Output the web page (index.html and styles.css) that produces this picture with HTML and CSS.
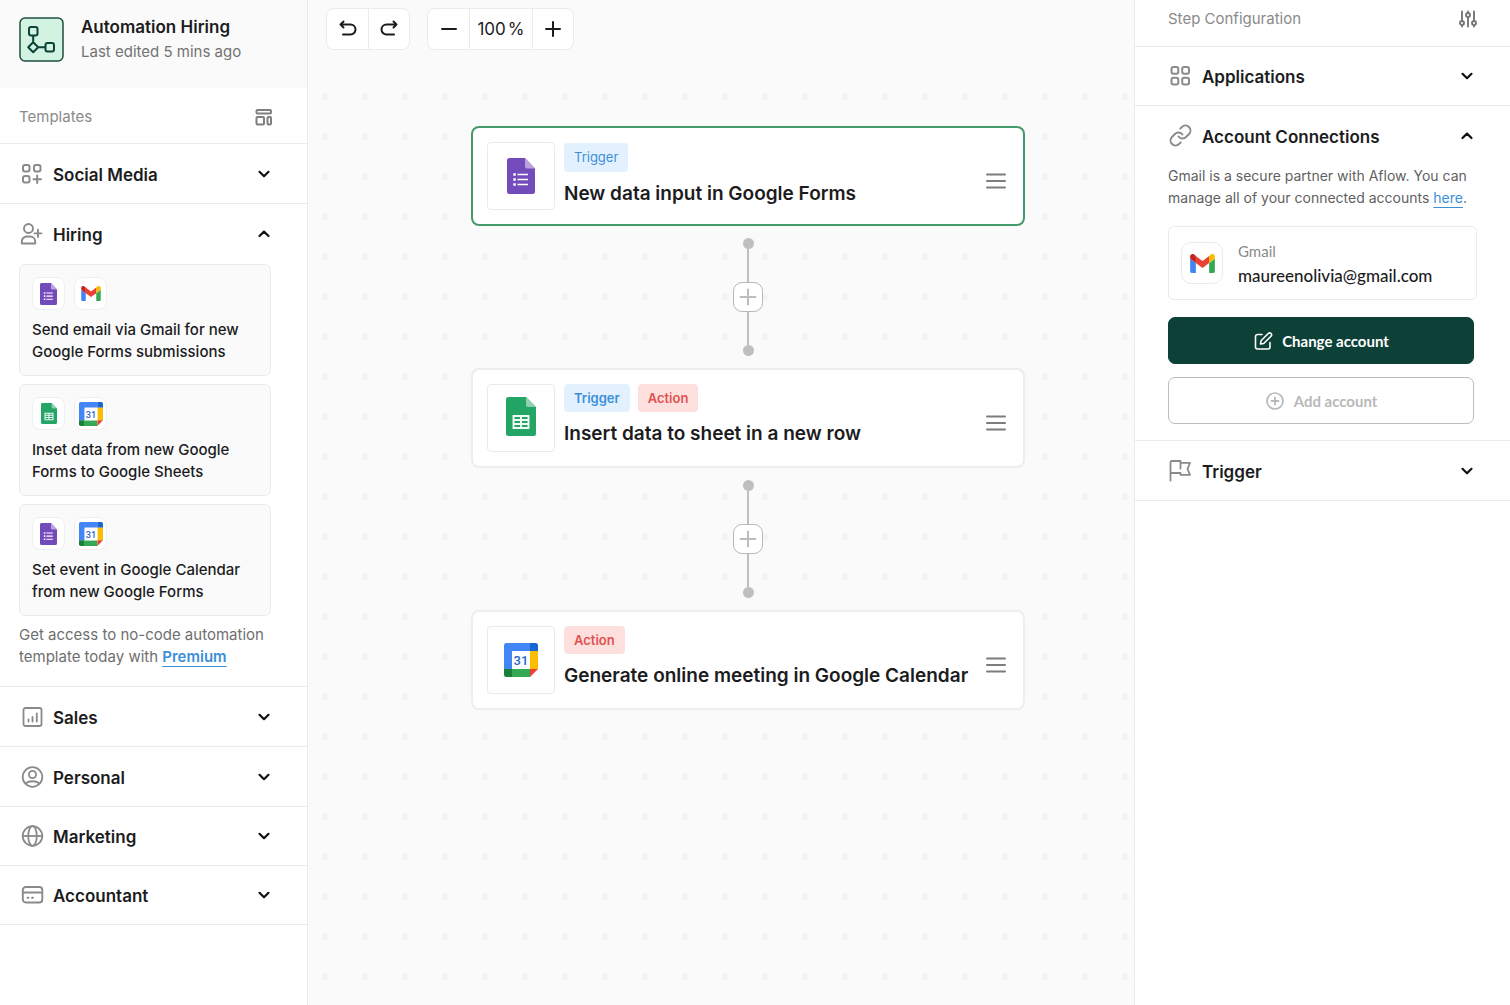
FILE: index.html
```html
<!DOCTYPE html>
<html lang="en">
<head>
<meta charset="utf-8">
<meta name="viewport" content="width=device-width, initial-scale=1">
<title>Automation Hiring</title>
<link rel="stylesheet" href="styles.css">
</head>
<body>
<svg class="sprite" aria-hidden="true">
  <symbol id="forms" viewBox="0 0 28 36">
    <path d="M2.500 0H18L28 10.500V33.500A2.500 2.500 0 0 1 25.500 36H2.500A2.500 2.500 0 0 1 0 33.500V2.500A2.500 2.500 0 0 1 2.500 0Z" fill="#744bba"/>
    <path d="M18 0L28 10.500H20A2 2 0 0 1 18 8.500Z" fill="#b9a2dd"/>
    <path d="M10.500 16.500H21M10.500 21.500H21M10.500 26.500H21" stroke="#fff" stroke-width="1.700"/>
    <path d="M6.300 16.500H8.800M6.300 21.500H8.800M6.300 26.500H8.800" stroke="#fff" stroke-width="2.500"/>
  </symbol>
  <symbol id="sheets" viewBox="0 0 30 39">
    <path d="M2.500 0H20L30 10V36.500A2.500 2.500 0 0 1 27.500 39H2.500A2.500 2.500 0 0 1 0 36.500V2.500A2.500 2.500 0 0 1 2.500 0Z" fill="#23a566"/>
    <path d="M20 0L30 10H22A2 2 0 0 1 20 8Z" fill="#8ed1b1"/>
    <path d="M7.500 19H22.500V31H7.500ZM7.500 23H22.500M7.500 27H22.500M15 19V31" fill="none" stroke="#f0faf5" stroke-width="1.900"/>
  </symbol>
  <symbol id="calendar" viewBox="0 0 34 34">
    <path d="M2.500 0H26V8H8V26H0V2.500A2.500 2.500 0 0 1 2.500 0Z" fill="#4285f4"/>
    <path d="M26 0H31.500A2.500 2.500 0 0 1 34 2.500V8H26Z" fill="#1967d2"/>
    <path d="M26 8H34V26H26Z" fill="#fbbc04"/>
    <path d="M8 26H26V34H8Z" fill="#34a853"/>
    <path d="M0 26H8V34H2.500A2.500 2.500 0 0 1 0 31.500Z" fill="#188038"/>
    <path d="M26 26H34L26 34Z" fill="#ea4335"/>
    <path d="M8 8H26V26H8Z" fill="#fff"/>
    <text x="17" y="22" text-anchor="middle" font-family="Roboto, sans-serif" font-size="13" font-weight="500" fill="#1f66d0">31</text>
  </symbol>
  <symbol id="gmail" viewBox="0 0 52 40">
    <path d="M3.500 40H12V19L0 10V36.500A3.500 3.500 0 0 0 3.500 40Z" fill="#4285f4"/>
    <path d="M40 40H48.500A3.500 3.500 0 0 0 52 36.500V10L40 19Z" fill="#34a853"/>
    <path d="M40 4V19L52 10V5.200C52 .8 47-1.700 43.400 1Z" fill="#fbbc04"/>
    <path d="M12 19V4L26 14.500L40 4V19L26 29.500Z" fill="#ea4335"/>
    <path d="M0 5.200V10L12 19V4L8.600 1C5-1.700 0 .8 0 5.200Z" fill="#c5221f"/>
  </symbol>
  <symbol id="down" viewBox="0 0 24 24"><path d="M7.500 9.800L12 14.200L16.500 9.800" fill="none" stroke="#111" stroke-width="2.200" stroke-linecap="round" stroke-linejoin="round"/></symbol>
  <symbol id="up" viewBox="0 0 24 24"><path d="M7.500 14L12 9.600L16.500 14" fill="none" stroke="#111" stroke-width="2.200" stroke-linecap="round" stroke-linejoin="round"/></symbol>
</svg>

<div class="app">
  <aside class="sidebar">
    <header class="project">
      <svg class="logo" viewBox="0 0 45 45" aria-hidden="true">
        <rect x="1" y="1" width="43" height="43" rx="5" fill="#d2f3e1" stroke="#1d4e42" stroke-width="1.500"/>
        <g fill="none" stroke="#0c4337" stroke-width="2" stroke-linejoin="round">
          <rect x="10" y="10" width="8.500" height="8.500" rx="2"/>
          <rect x="26.500" y="26" width="8.500" height="8.500" rx="2"/>
          <path d="M14.200 25.200L19.200 30.200L14.200 35.200L9.200 30.200ZM14.200 18.500V25.200M19.200 30.200H26.500"/>
        </g>
      </svg>
      <div>
        <h1 class="project-name">Automation Hiring</h1>
        <p class="project-meta">Last edited 5 mins ago</p>
      </div>
    </header>

    <div class="panel-title">
      <h2 class="panel-name">Templates</h2>
      <svg class="icon-s" viewBox="0 0 18 18" aria-hidden="true"><g fill="none" stroke="#7f7f7f" stroke-width="2"><rect x="1.500" y="2" width="14.500" height="3.500" rx="1"/><rect x="1.500" y="9" width="7.500" height="7.500" rx="1"/><rect x="12.500" y="9" width="3.500" height="7.500" rx="1"/></g></svg>
    </div>

    <section class="section">
      <button class="section-head" aria-expanded="false">
        <svg class="icon" viewBox="0 0 24 24" aria-hidden="true"><g fill="none" stroke="#8a8a8a" stroke-width="2" stroke-linecap="round"><rect x="3" y="3" width="6.500" height="6.500" rx="2"/><rect x="14" y="3" width="6.500" height="6.500" rx="2"/><rect x="3" y="14" width="6.500" height="6.500" rx="2"/><path d="M17.200 13.500V21M13.500 17.200H21"/></g></svg>
        <span class="section-name">Social Media</span>
        <svg class="icon"><use href="#down"/></svg>
      </button>
    </section>

    <section class="section">
      <button class="section-head" aria-expanded="true">
        <svg class="icon" viewBox="0 0 24 24" aria-hidden="true"><g fill="none" stroke="#8a8a8a" stroke-width="1.900" stroke-linecap="round" stroke-linejoin="round"><circle cx="8.500" cy="6.500" r="4.500"/><path d="M1.800 21.500V19.500A5 5 0 0 1 6.800 14.500H10.200A5 5 0 0 1 15.200 19.500V21.500ZM18 7.800V15M14.500 11.400H21.500"/></g></svg>
        <span class="section-name">Hiring</span>
        <svg class="icon"><use href="#up"/></svg>
      </button>
      <div class="templates">
        <a class="template" href="#">
          <span class="apps"><span class="app-s"><svg width="17" height="22"><use href="#forms"/></svg></span><span class="app-s"><svg width="20" height="15"><use href="#gmail"/></svg></span></span>
          <span>Send email via Gmail for new Google Forms submissions</span>
        </a>
        <a class="template" href="#">
          <span class="apps"><span class="app-s"><svg width="16" height="21"><use href="#sheets"/></svg></span><span class="app-s"><svg width="24" height="24"><use href="#calendar"/></svg></span></span>
          <span>Inset data from new Google Forms to Google Sheets</span>
        </a>
        <a class="template" href="#">
          <span class="apps"><span class="app-s"><svg width="17" height="22"><use href="#forms"/></svg></span><span class="app-s"><svg width="24" height="24"><use href="#calendar"/></svg></span></span>
          <span>Set event in Google Calendar from new Google Forms</span>
        </a>
      </div>
      <p class="upsell">Get access to no-code automation template today with <a class="link strong" href="#">Premium</a></p>
    </section>

    <section class="section">
      <button class="section-head" aria-expanded="false">
        <svg class="icon" viewBox="0 0 24 24" aria-hidden="true"><g fill="none" stroke="#8a8a8a" stroke-width="1.800" stroke-linecap="round"><rect x="3.500" y="3" width="18" height="18" rx="2"/><path d="M8.500 14.500V16.500M12.500 12V16.500M16.800 8.500V16.500"/></g></svg>
        <span class="section-name">Sales</span>
        <svg class="icon"><use href="#down"/></svg>
      </button>
    </section>
    <section class="section">
      <button class="section-head" aria-expanded="false">
        <svg class="icon" viewBox="0 0 24 24" aria-hidden="true"><g fill="none" stroke="#8a8a8a" stroke-width="1.800"><circle cx="12.500" cy="12" r="9.800"/><circle cx="12.500" cy="9.500" r="3.600"/><path d="M5.800 19C8 15.300 17 15.300 19.200 19"/></g></svg>
        <span class="section-name">Personal</span>
        <svg class="icon"><use href="#down"/></svg>
      </button>
    </section>
    <section class="section">
      <button class="section-head compact" aria-expanded="false">
        <svg class="icon" viewBox="0 0 24 24" aria-hidden="true"><g fill="none" stroke="#8a8a8a" stroke-width="1.800"><circle cx="12.500" cy="12" r="9.800"/><ellipse cx="12.500" cy="12" rx="4.300" ry="9.800"/><path d="M2.700 12H22.300"/></g></svg>
        <span class="section-name">Marketing</span>
        <svg class="icon"><use href="#down"/></svg>
      </button>
    </section>
    <section class="section">
      <button class="section-head compact" aria-expanded="false">
        <svg class="icon" viewBox="0 0 24 24" aria-hidden="true"><g fill="none" stroke="#8a8a8a" stroke-width="1.900" stroke-linecap="round"><rect x="2.800" y="4" width="19.500" height="15.500" rx="3"/><path d="M3 9.500H22M7.500 14.800H8.500M12 14.800H13"/></g></svg>
        <span class="section-name">Accountant</span>
        <svg class="icon"><use href="#down"/></svg>
      </button>
    </section>
  </aside>

  <main class="canvas">
    <div class="toolbar">
      <div class="tools">
        <button class="tool" aria-label="Undo"><svg width="20" height="20" viewBox="0 0 20 20"><path d="M5.500 2.500L2.500 5.500L5.500 8.500M3 5.500H12.500A5 5 0 0 1 12.500 15.500H5" class="ink"/></svg></button>
        <button class="tool" aria-label="Redo"><svg width="20" height="20" viewBox="0 0 20 20"><path d="M14.500 2.500L17.500 5.500L14.500 8.500M17 5.500H7.500A5 5 0 0 0 7.500 15.500H15" class="ink"/></svg></button>
      </div>
      <div class="tools">
        <button class="tool" aria-label="Zoom out"><svg width="20" height="20" viewBox="0 0 20 20"><path d="M3 10H17" class="ink"/></svg></button>
        <output class="zoom"><span>100</span><span>%</span></output>
        <button class="tool" aria-label="Zoom in"><svg width="20" height="20" viewBox="0 0 20 20"><path d="M3 10H17M10 3V17" class="ink"/></svg></button>
      </div>
    </div>

    <div class="board">
      <article class="node selected">
        <div class="node-app"><svg width="28" height="36"><use href="#forms"/></svg></div>
        <div class="node-body">
          <div class="tags"><span class="tag light">Trigger</span></div>
          <h3 class="node-title">New data input in Google Forms</h3>
        </div>
        <button class="menu" aria-label="Step menu"><svg width="20" height="18" viewBox="0 0 20 18"><path d="M1 2.500H19M1 9H19M1 15.500H19" class="bars"/></svg></button>
      </article>
      <div class="connector"><i class="dot"></i><i class="line"></i><button class="add" aria-label="Add step"><svg width="18" height="18" viewBox="0 0 18 18"><path d="M1.500 9H16.500M9 1.500V16.500" class="plus"/></svg></button><i class="line"></i><i class="dot"></i></div>
      <article class="node">
        <div class="node-app sheet"><svg width="30" height="39"><use href="#sheets"/></svg></div>
        <div class="node-body">
          <div class="tags"><span class="tag">Trigger</span><span class="tag action">Action</span></div>
          <h3 class="node-title">Insert data to sheet in a new row</h3>
        </div>
        <button class="menu" aria-label="Step menu"><svg width="20" height="18" viewBox="0 0 20 18"><path d="M1 2.500H19M1 9H19M1 15.500H19" class="bars"/></svg></button>
      </article>
      <div class="connector"><i class="dot"></i><i class="line"></i><button class="add" aria-label="Add step"><svg width="18" height="18" viewBox="0 0 18 18"><path d="M1.500 9H16.500M9 1.500V16.500" class="plus"/></svg></button><i class="line"></i><i class="dot"></i></div>
      <article class="node">
        <div class="node-app"><svg width="34" height="34"><use href="#calendar"/></svg></div>
        <div class="node-body">
          <div class="tags"><span class="tag action">Action</span></div>
          <h3 class="node-title">Generate online meeting in Google Calendar</h3>
        </div>
        <button class="menu" aria-label="Step menu"><svg width="20" height="18" viewBox="0 0 20 18"><path d="M1 2.500H19M1 9H19M1 15.500H19" class="bars"/></svg></button>
      </article>
    </div>
  </main>

  <aside class="config">
    <div class="panel-title config-title">
      <h2 class="panel-name">Step Configuration</h2>
      <svg class="icon-s" viewBox="0 0 18 18" aria-hidden="true"><g fill="none" stroke="#777" stroke-width="1.900" stroke-linecap="round"><path d="M3 1.500V10.500M3 15.500V16.500M9 1.500V2.500M9 7.500V16.500M15 1.500V10.500M15 15.500V16.500"/><circle cx="3" cy="13" r="2"/><circle cx="9" cy="5" r="2"/><circle cx="15" cy="13" r="2"/></g></svg>
    </div>
    <section class="section">
      <button class="section-head compact" aria-expanded="false">
        <svg class="icon" viewBox="0 0 24 24" aria-hidden="true"><g fill="none" stroke="#8a8a8a" stroke-width="2"><rect x="3.500" y="3" width="6.800" height="6.800" rx="2"/><rect x="14.200" y="3" width="6.800" height="6.800" rx="2"/><rect x="3.500" y="13.800" width="6.800" height="6.800" rx="2"/><rect x="14.200" y="13.800" width="6.800" height="6.800" rx="2"/></g></svg>
        <span class="section-name">Applications</span>
        <svg class="icon"><use href="#down"/></svg>
      </button>
    </section>
    <section class="section">
      <button class="section-head" aria-expanded="true">
        <svg class="icon" viewBox="0 0 24 24" aria-hidden="true"><g transform="translate(.5 -.5)" fill="none" stroke="#8a8a8a" stroke-width="1.900" stroke-linecap="round" stroke-linejoin="round"><path d="M10 13a5 5 0 0 0 7.540.540l3-3a5 5 0 0 0-7.070-7.070l-1.720 1.710"/><path d="M14 11a5 5 0 0 0-7.540-.540l-3 3a5 5 0 0 0 7.070 7.070l1.710-1.710"/></g></svg>
        <span class="section-name">Account Connections</span>
        <svg class="icon"><use href="#up"/></svg>
      </button>
      <div class="connections">
        <p class="note">Gmail is a secure partner with Aflow. You can manage all of your connected accounts <a class="link" href="#">here</a>.</p>
        <div class="account">
          <span class="account-app"><svg width="25" height="19"><use href="#gmail"/></svg></span>
          <div>
            <p class="account-kind">Gmail</p>
            <p class="account-mail">maureenolivia@gmail.com</p>
          </div>
        </div>
        <div class="actions">
          <button class="btn primary"><svg width="20" height="20" viewBox="0 0 20 20"><path d="M9 3.500H4.500A2 2 0 0 0 2.500 5.500V16A2 2 0 0 0 4.500 18H15A2 2 0 0 0 17 16V11.500M7.500 13L8 9.800L15.300 2.500A1.800 1.800 0 0 1 18 5.200L10.700 12.500Z" fill="none" stroke="#fff" stroke-width="1.600" stroke-linecap="round" stroke-linejoin="round"/></svg>Change account</button>
          <button class="btn"><svg width="20" height="20" viewBox="0 0 20 20"><path d="M10 6.500V13.500M6.500 10H13.500" fill="none" stroke="#b9b9b9" stroke-width="1.800" stroke-linecap="round"/><circle cx="10" cy="10" r="8" fill="none" stroke="#b9b9b9" stroke-width="1.700"/></svg>Add account</button>
        </div>
      </div>
    </section>
    <section class="section">
      <button class="section-head" aria-expanded="false">
        <svg class="icon" viewBox="0 0 24 24" aria-hidden="true"><path d="M2.500 21.500V3.500A1.500 1.500 0 0 1 4 2H12.500V9.500M12.500 3.800H22L19.500 10L22 15.800H12.500V14H2.500" fill="none" stroke="#8a8a8a" stroke-width="1.800" stroke-linecap="round" stroke-linejoin="round"/></svg>
        <span class="section-name">Trigger</span>
        <svg class="icon"><use href="#down"/></svg>
      </button>
    </section>
  </aside>
</div>
</body>
</html>
```
FILE: styles.css
```css
* { box-sizing: border-box; }

body {
  margin: 0;
  font-family: Inter, "Liberation Sans", sans-serif;
  font-size: 15px;
  line-height: 22px;
  color: #1c1c1e;
  background: #fff;
}

h1, h2, h3, p { margin: 0; }

button {
  margin: 0;
  padding: 0;
  border: 0;
  background: none;
  font: inherit;
  color: inherit;
  cursor: pointer;
}

svg { display: block; flex: none; }

.sprite { display: none; }

.app {
  display: grid;
  grid-template-columns: 308px minmax(0, 1fr) 376px;
  min-height: 100vh;
}

/* Side panels */
.sidebar { border-right: 1px solid #ebebeb; }
.config { border-left: 1px solid #ebebeb; }

.project {
  display: flex;
  gap: 17px;
  height: 88px;
  padding: 17px 18px 0 19px;
  background: #fafafa;
}
.logo { width: 45px; height: 45px; }
.project-name { font-size: 17px; line-height: 20px; font-weight: 600; }
.project-meta { margin-top: 4px; color: #737373; }

.panel-title {
  display: flex;
  align-items: center;
  justify-content: space-between;
  height: 56px;
  padding: 2px 34px 0 19px;
  border-bottom: 1px solid #ebebeb;
}
.config-title { height: 47px; padding: 0 33px 8px; }
.panel-name { font-size: 15px; font-weight: 400; color: #8a8a8a; }

.section { border-bottom: 1px solid #ebebeb; }
.section-head {
  display: flex;
  align-items: center;
  gap: 9px;
  width: 100%;
  height: 59px;
  padding: 0 31px 0 20px;
  text-align: left;
}
.section-head.compact { height: 58px; }
.config .section-head { gap: 10px; padding-left: 33px; }
.section-name { flex: 1; padding-top: 2px; font-size: 17px; font-weight: 600; }
.icon { width: 24px; height: 24px; }
.icon-s { width: 18px; height: 18px; }

.templates {
  display: grid;
  gap: 8px;
  padding: 1px 36px 0 19px;
}
.template {
  display: grid;
  gap: 9px;
  padding: 12px;
  border: 1px solid #ebebeb;
  border-radius: 6px;
  background: #fafafa;
  font-weight: 500;
  color: inherit;
  text-decoration: none;
}
.apps { display: flex; gap: 9px; }
.app-s {
  display: grid;
  place-items: center;
  width: 33px;
  height: 33px;
  border: 1px solid #efefef;
  border-radius: 8px;
  background: #fff;
}
.upsell { padding: 8px 36px 18px 19px; color: #6f6f6f; }

.link {
  color: #3b8fd9;
  text-decoration: underline;
  text-underline-offset: 4px;
  text-decoration-thickness: 1px;
}
.link.strong { font-weight: 600; }

/* Canvas */
.canvas { background: #fafafa; }
.toolbar { display: flex; gap: 17px; height: 77px; padding: 8px 18px; }
.tools {
  display: flex;
  height: 42px;
  border: 1px solid #ebebeb;
  border-radius: 8px;
  background: #fff;
}
.tool { display: grid; place-items: center; width: 41px; }
.tools > * + * { border-left: 1px solid #ebebeb; }
.zoom {
  display: flex;
  align-items: center;
  justify-content: center;
  gap: 2px;
  width: 63px;
  font-size: 17px;
}
.ink {
  fill: none;
  stroke: #1c1c1e;
  stroke-width: 2;
  stroke-linecap: round;
  stroke-linejoin: round;
}

.board {
  min-height: calc(100vh - 77px);
  padding: 49px 109px 49px 163px;
  background: radial-gradient(circle, #f3f3f3 3px, transparent 4px) -3px 0 / 40px 40px;
}
.node {
  display: flex;
  gap: 9px;
  max-width: 640px;
  min-height: 100px;
  padding: 14px 17px 14px 14px;
  border: 2px solid #ededed;
  border-radius: 8px;
  background: #fff;
}
.node.selected { border-color: #459a6c; }
.node-app {
  display: grid;
  flex: none;
  place-items: center;
  width: 68px;
  height: 68px;
  border: 1px solid #ebebeb;
  border-radius: 4px;
}
.node-app.sheet { padding-bottom: 3px; }
.node-body { flex: 1; min-width: 0; }
.selected .node-body { padding-top: 1px; }
.tags { display: flex; gap: 8px; }
.tag {
  padding: 3px 10px;
  border-radius: 4px;
  background: #e3f1fe;
  font-size: 13px;
  font-weight: 600;
  color: #3b8fd9;
}
.tag.light { padding-bottom: 4px; font-weight: 400; }
.tag.action { background: #fde0de; color: #e05252; }
.node-title { margin-top: 8px; font-size: 19px; line-height: 28px; font-weight: 600; white-space: nowrap; }
.menu { align-self: center; margin-top: 9px; }
.bars { stroke: #7d7d7d; stroke-width: 2; stroke-linecap: round; }

.connector {
  display: flex;
  flex-direction: column;
  align-items: center;
  max-width: 640px;
  height: 142px;
  padding: 12px 0;
}
.dot { width: 11px; height: 11px; border-radius: 50%; background: #bfbfbf; }
.line { flex: 1; width: 2px; background: #bfbfbf; }
.add {
  display: grid;
  place-items: center;
  width: 30px;
  height: 30px;
  border: 1px solid #b8b8b8;
  border-radius: 9px;
  background: #fff;
}
.plus { stroke: #bdbdbd; stroke-width: 2; stroke-linecap: round; }

/* Account connections */
.connections { padding: 0 33px 16px; }
.note { font-size: 14px; color: #5f5f5f; }
.account {
  display: flex;
  align-items: center;
  gap: 15px;
  height: 74px;
  margin-top: 17px;
  padding: 0 12px;
  border: 1px solid #ebebeb;
  border-radius: 6px;
  font-family: Lato, sans-serif;
}
.account-app {
  display: grid;
  place-items: center;
  width: 42px;
  height: 42px;
  border: 1px solid #ebebeb;
  border-radius: 10px;
}
.account-kind { color: #8a8a8a; }
.account-mail { margin-top: 3px; font-size: 17px; font-weight: 500; }
.actions { display: grid; gap: 13px; margin-top: 17px; padding-right: 3px; }
.btn {
  display: flex;
  align-items: center;
  justify-content: center;
  gap: 9px;
  height: 47px;
  border: 1px solid #bdbdbd;
  border-radius: 7px;
  font-family: Lato, sans-serif;
  font-weight: 700;
  color: #b9b9b9;
}
.btn.primary { border-color: #0d4137; background: #0d4137; color: #fff; }
```
